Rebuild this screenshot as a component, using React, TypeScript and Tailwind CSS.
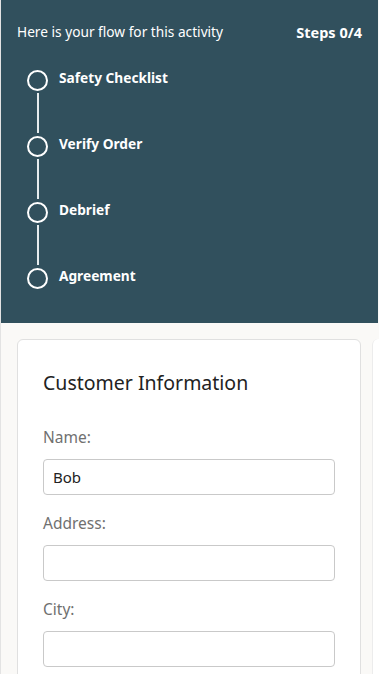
const steps = ['Safety Checklist', 'Verify Order', 'Debrief', 'Agreement']

const Field = ({ label, value }: { label: string; value?: string }) => {
  return (
    <div className="mt-[18px] first:mt-0">
      <label className="block text-[15.5px] leading-[20px] text-[#707070]">{label}</label>
      <div className="mt-[12px] h-[36px] rounded-[4px] border border-[#c9c9c9] bg-white px-[9px] flex items-center text-[15px] text-[#222]">
        {value}
      </div>
    </div>
  )
}

const App = () => {
  return (
    <div className="w-[379px] h-[674px] overflow-hidden bg-[#faf9f7] border-l border-[#e3e3e3] font-['Noto_Sans','Open_Sans',sans-serif]">
      <div className="bg-[#31505d] mr-[1px] h-[323px] pt-[22px] pl-[16px] pr-[16px] text-white">
        <div className="flex items-center justify-between text-[13.7px] leading-[20px]">
          <span>Here is your flow for this activity</span>
          <span className="font-bold text-[14.5px]">Steps 0/4</span>
        </div>
        <div className="mt-[27px] pl-[10px]">
          {steps.map((s, i) => (
            <div key={s}>
              <div className="flex items-center gap-[11px] h-[22px]">
                <span className="w-[21px] h-[21px] rounded-full border-2 border-white box-border shrink-0" />
                <span className="font-bold text-[13.7px] leading-[20px] -mt-[4px]">{s}</span>
              </div>
              {i < steps.length - 1 && (
                <div className="ml-[10px] w-[1.5px] h-[40px] my-[2px] bg-[#e6ecee]" />
              )}
            </div>
          ))}
        </div>
      </div>
      <div className="flex pt-[16px] pl-[16px]">
        <div className="w-[344px] shrink-0 rounded-[6px] border border-[#e0e0e0] bg-white px-[25px] pt-[30px] pb-[20px]">
          <h2 className="text-[19.5px] leading-[26px] text-[#222]">Customer Information</h2>
          <div className="mt-[31px]">
            <Field label="Name:" value="Bob" />
            <Field label="Address:" />
            <Field label="City:" />
          </div>
        </div>
        <div className="ml-[11px] w-[20px] h-[400px] border-l border-[#ececec] bg-white rounded-tl-[6px]" />
      </div>
    </div>
  )
}

export default App
